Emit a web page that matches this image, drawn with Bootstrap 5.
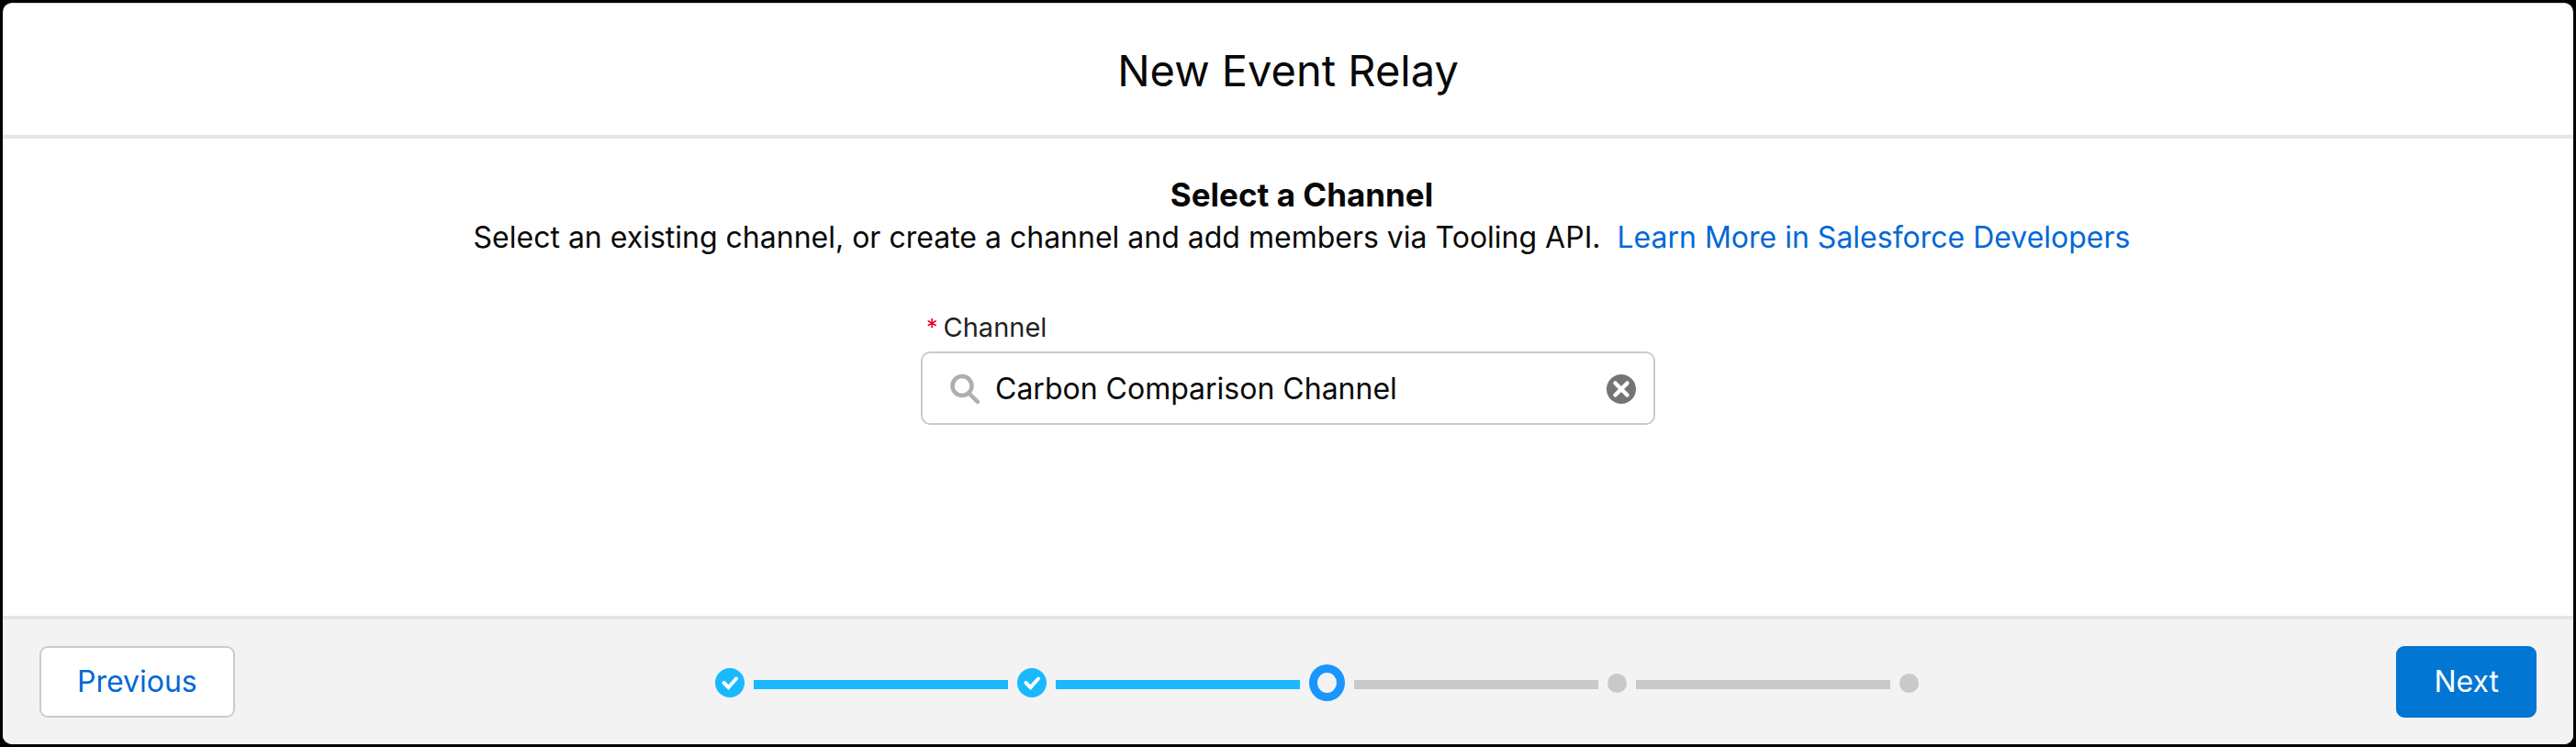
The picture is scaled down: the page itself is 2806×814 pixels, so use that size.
<!DOCTYPE html>
<html lang="en">
<head>
<meta charset="utf-8">
<meta name="viewport" content="width=device-width, initial-scale=1">
<title>New Event Relay</title>
<link rel="stylesheet" href="https://cdn.jsdelivr.net/npm/bootstrap@5.3.0/dist/css/bootstrap.min.css">
<style>
  body { background: #000; color: #080808; font-family: Inter, "Liberation Sans", sans-serif; font-size: 32px; line-height: 48px; padding: 3px; }
  .wizard { background: #fff; border-radius: 10px; border-top: 1px solid #d8d8d8; min-height: calc(100vh - 6px); overflow: hidden; }
  .wizard-head { border-bottom: 4px solid #e5e5e5; padding: 43px 40px 40px; }
  .wizard-head h1 { font-size: 47px; line-height: 60px; font-weight: 400; }
  .wizard-intro { padding: 38px 0 0 30px; }
  .wizard-intro h2 { font-size: 35px; line-height: 46px; font-weight: 700; }
  .wizard-link { color: #0068d6; text-decoration: none; margin-left: 9px; }
  .channel-field { width: 800px; max-width: 100%; margin-top: 54px; }
  .channel-field label { font-size: 29px; line-height: 40px; padding-left: 6px; gap: 6px; margin-bottom: 6px; color: #222; }
  .required-mark { color: #ea001e; font-size: 25px; }
  .lookup { border: 2px solid #cbcbcb; border-radius: 10px; height: 80px; padding: 1px 19px 0 29px; background: #fff; }
  .lookup .form-control { font-size: 32px; line-height: 48px; padding: 0 0 0 16px; color: #080808; background: none; }
  .clear-btn { line-height: 0; }
  .wizard-foot { background: #f3f3f3; border-top: 4px solid #e5e5e5; padding: 29px 40px; }
  .wizard-btn { font-size: 32px; line-height: 48px; padding: 13px 39px; border: 2px solid #cbcbcb; border-radius: 9px; }
  .btn-back, .btn-back:hover { background: #fff; color: #0068d6; border-color: #cbcbcb; }
  .btn-forward, .btn-forward:hover { background: #0176d3; color: #fff; border-color: #0176d3; }
  .steps { width: 49%; padding: 2px 9px 0 12px; gap: 10px; }
  .step-mark { line-height: 0; }
  .step-bar { flex: 267 1 0; height: 10px; margin-top: 4px; background: #c9c9c9; }
  .step-bar-end { flex-grow: 278; }
  .step-bar-done { background: #1ab9ff; }
  .step-ring { width: 39px; height: 40px; border: 9px solid #1b96ff; border-radius: 50%; }
  .step-dot { width: 21px; height: 21px; border-radius: 50%; background: #c9c9c9; }
</style>
</head>
<body>
<main class="wizard d-flex flex-column">
  <header class="wizard-head text-center">
    <h1 class="m-0">New Event Relay</h1>
  </header>
  <section class="flex-grow-1">
    <div class="wizard-intro text-center">
      <h2 class="m-0">Select a Channel</h2>
      <p class="m-0">Select an existing channel, or create a channel and add members via Tooling API. <a class="wizard-link" href="#">Learn More in Salesforce Developers</a></p>
    </div>
    <div class="channel-field mx-auto">
      <label class="d-flex" for="channel"><span class="required-mark">*</span>Channel</label>
      <div class="lookup d-flex align-items-center">
        <svg class="flex-shrink-0" width="34" height="34" viewBox="0 0 34 34" fill="none" stroke="#aeaeae" aria-hidden="true">
          <circle cx="14" cy="13.500" r="10.500" stroke-width="4.500"/>
          <path d="M21.500 21.500 31 31" stroke-width="4.500"  stroke-linecap="round"/>
        </svg>
        <input class="form-control border-0 shadow-none" id="channel" type="text" value="Carbon Comparison Channel" required>
        <button class="clear-btn btn p-0 border-0" type="button" aria-label="Clear selection">
          <svg width="32" height="32" viewBox="0 0 32 32" aria-hidden="true">
            <circle cx="16" cy="16" r="16" fill="#747474"/>
            <path d="M9.500 9.500l13 13M22.500 9.500l-13 13" stroke="#fff" stroke-width="4.500" stroke-linecap="round"/>
          </svg>
        </button>
      </div>
    </div>
  </section>
  <footer class="wizard-foot d-flex justify-content-between align-items-center">
    <button class="wizard-btn btn-back btn" type="button">Previous</button>
    <div class="steps d-flex align-items-center" role="progressbar" aria-label="Step 3 of 5" aria-valuemin="1" aria-valuemax="5" aria-valuenow="3">
      <span class="step-mark"><svg width="32" height="32" viewBox="0 0 32 32" aria-hidden="true"><circle cx="16" cy="16" r="16" fill="#1ab9ff"/><path d="M9.500 16l5 5L23 11.500" fill="none" stroke="#fff" stroke-width="4" stroke-linecap="round"/></svg></span>
      <span class="step-bar step-bar-end step-bar-done"></span>
      <span class="step-mark"><svg width="32" height="32" viewBox="0 0 32 32" aria-hidden="true"><circle cx="16" cy="16" r="16" fill="#1ab9ff"/><path d="M9.500 16l5 5L23 11.500" fill="none" stroke="#fff" stroke-width="4" stroke-linecap="round"/></svg></span>
      <span class="step-bar step-bar-done"></span>
      <span class="step-ring"></span>
      <span class="step-bar"></span>
      <span class="step-dot"></span>
      <span class="step-bar step-bar-end"></span>
      <span class="step-dot"></span>
    </div>
    <button class="wizard-btn btn-forward btn" type="button">Next</button>
  </footer>
</main>
<script src="https://cdn.jsdelivr.net/npm/bootstrap@5.3.0/dist/js/bootstrap.bundle.min.js"></script>
</body>
</html>
